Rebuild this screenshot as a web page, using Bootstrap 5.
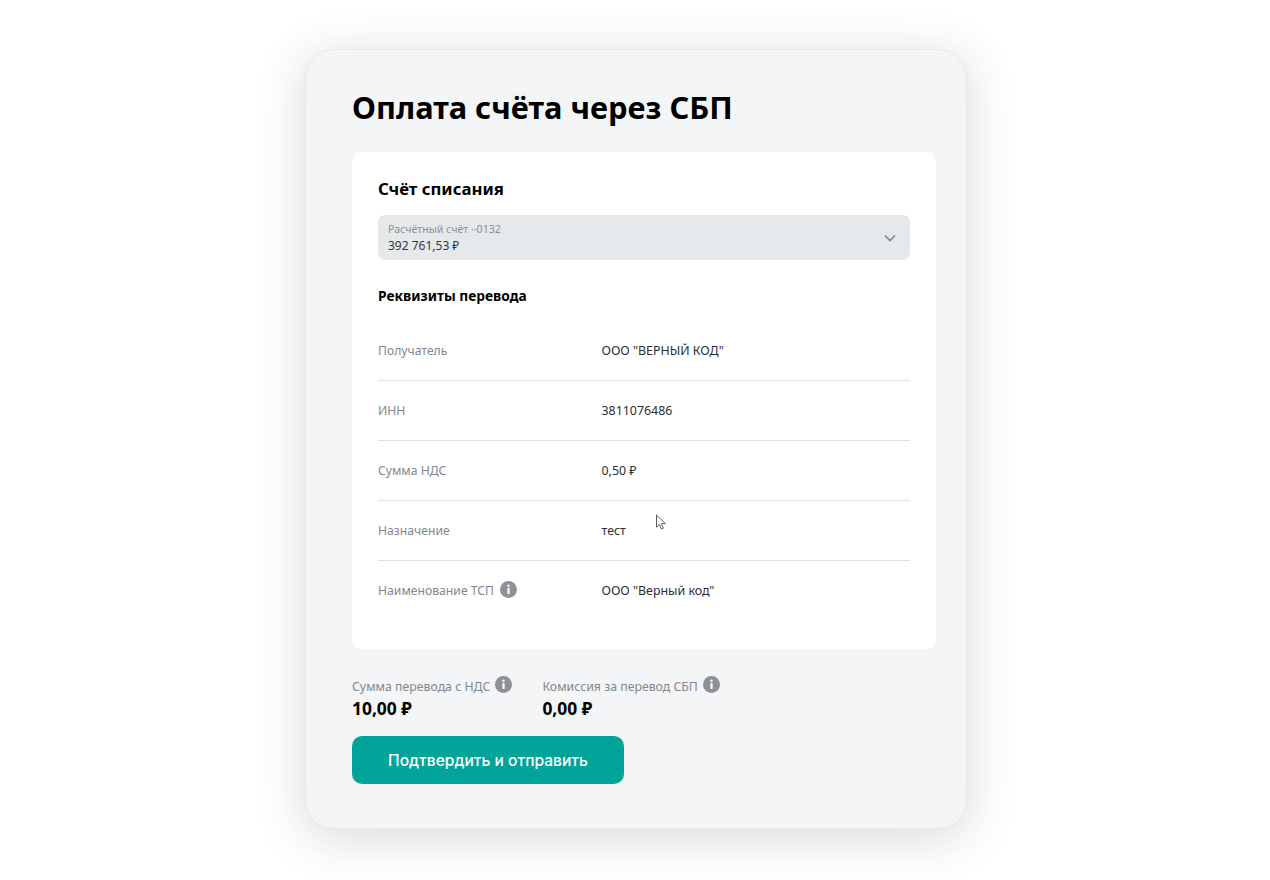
<!DOCTYPE html>
<html lang="ru">
<head>
<meta charset="utf-8">
<title>Оплата счёта через СБП</title>
<link href="https://cdn.jsdelivr.net/npm/bootstrap@5.3.0/dist/css/bootstrap.min.css" rel="stylesheet">
<style>
html,body{height:880px;overflow:hidden}
body{background:#fff;font-family:"Noto Sans","Open Sans",sans-serif;color:#1d2126}
.stage{height:880px;padding-top:49px}
.pay-panel{width:662px;height:780px;margin-left:305px;padding:35px 30px 0 46px;background:#f3f5f6;border:1px solid #e7e8ea;border-radius:28px;box-shadow:0 8px 50px rgba(50,50,75,.19)}
.pay-title{font-size:30.8px;line-height:44px;font-weight:700;color:#000;margin:0 0 23px}
.pay-box{height:497px;background:#fff;border-radius:10px;padding:25px 26px 0}
.pay-h2{font-size:16.8px;line-height:24px;font-weight:700;color:#000;margin:0 0 14px}
.acct{height:45px;background:#e6e9eb;border-radius:7px;padding:7px 10px 0;line-height:16px}
.acct-label{font-size:10.6px;color:#8b8f96;line-height:14px}
.acct-sum{font-size:12px;color:#33373c;line-height:17px;margin-top:1px}
.chev{margin:12px 4px 0 0}
.pay-h3{font-size:13.8px;line-height:20px;font-weight:700;color:#000;margin:26px 0 15px}
.req-row{height:60px;border-bottom:1px solid #e0e2e3}
.req-row:last-child{border-bottom:0}
.req-k{width:223.5px;font-size:12.2px;color:#83878e;padding-top:1px}
.req-v{font-size:12.4px;color:#2a2e33;padding-top:1px}
.req-row:last-child .req-k,.req-row:last-child .req-v{padding-top:0}
.inf{width:17px;height:17px;flex:none;display:block}
.inf-up{margin-top:-2px;margin-left:2px}
.totals{margin-top:27px;gap:30px}
.tot-k{font-size:12.3px;line-height:18px;color:#83878e;gap:5px}
.tot-txt{padding-top:2px}
.tot-v{font-size:17.4px;line-height:24px;font-weight:700;color:#000}
.go-btn{width:272px;height:48px;margin-top:16px;padding-top:8px;background:#00a499;border:0;border-radius:10px;color:#fff;font-family:Inter,sans-serif;font-size:15.6px;font-weight:500}
.go-btn:hover{background:#00a499;color:#fff}
.ptr{position:absolute;left:655px;top:514px;width:12px;height:17px}
</style>
</head>
<body>
<div class="stage">
  <div class="pay-panel">
    <h1 class="pay-title">Оплата счёта через СБП</h1>
    <div class="pay-box">
      <h2 class="pay-h2">Счёт списания</h2>
      <div class="acct d-flex justify-content-between">
        <div>
          <div class="acct-label">Расчётный счёт ··0132</div>
          <div class="acct-sum">392 761,53 ₽</div>
        </div>
        <svg class="chev" width="12" height="8" viewBox="0 0 12 8"><path d="M1 1.5l5 5 5-5" fill="none" stroke="#82868c" stroke-width="1.7"/></svg>
      </div>
      <h3 class="pay-h3">Реквизиты перевода</h3>
      <div>
        <div class="req-row d-flex align-items-center"><div class="req-k">Получатель</div><div class="req-v">ООО "ВЕРНЫЙ КОД"</div></div>
        <div class="req-row d-flex align-items-center"><div class="req-k">ИНН</div><div class="req-v">3811076486</div></div>
        <div class="req-row d-flex align-items-center"><div class="req-k">Сумма НДС</div><div class="req-v">0,50 ₽</div></div>
        <div class="req-row d-flex align-items-center"><div class="req-k">Назначение</div><div class="req-v">тест</div></div>
        <div class="req-row d-flex align-items-center"><div class="req-k d-flex align-items-center gap-1">Наименование ТСП <svg class="inf inf-up" viewBox="0 0 17 17"><circle cx="8.5" cy="8.5" r="8.5" fill="#8e9098"/><circle cx="8.5" cy="4.8" r="1.2" fill="#fff"/><rect x="7.4" y="7" width="2.2" height="6" rx=".5" fill="#fff"/></svg></div><div class="req-v">ООО "Верный код"</div></div>
      </div>
    </div>
    <div class="totals d-flex">
      <div>
        <div class="tot-k d-flex align-items-start"><span class="tot-txt">Сумма перевода с НДС</span> <svg class="inf" viewBox="0 0 17 17"><circle cx="8.5" cy="8.5" r="8.5" fill="#8e9098"/><circle cx="8.5" cy="4.8" r="1.2" fill="#fff"/><rect x="7.4" y="7" width="2.2" height="6" rx=".5" fill="#fff"/></svg></div>
        <div class="tot-v">10,00 ₽</div>
      </div>
      <div>
        <div class="tot-k d-flex align-items-start"><span class="tot-txt">Комиссия за перевод СБП</span> <svg class="inf" viewBox="0 0 17 17"><circle cx="8.5" cy="8.5" r="8.5" fill="#8e9098"/><circle cx="8.5" cy="4.8" r="1.2" fill="#fff"/><rect x="7.4" y="7" width="2.2" height="6" rx=".5" fill="#fff"/></svg></div>
        <div class="tot-v">0,00 ₽</div>
      </div>
    </div>
    <button type="button" class="btn go-btn">Подтвердить и отправить</button>
  </div>
</div>
<svg class="ptr" viewBox="0 0 12 17"><path d="M1.5 1v12.2l2.9-2.7 2 4.6 2-.9-2-4.5h4z" fill="#fff" stroke="#5c6066" stroke-width="1"/></svg>
<script src="https://cdn.jsdelivr.net/npm/bootstrap@5.3.0/dist/js/bootstrap.bundle.min.js"></script>
</body>
</html>
